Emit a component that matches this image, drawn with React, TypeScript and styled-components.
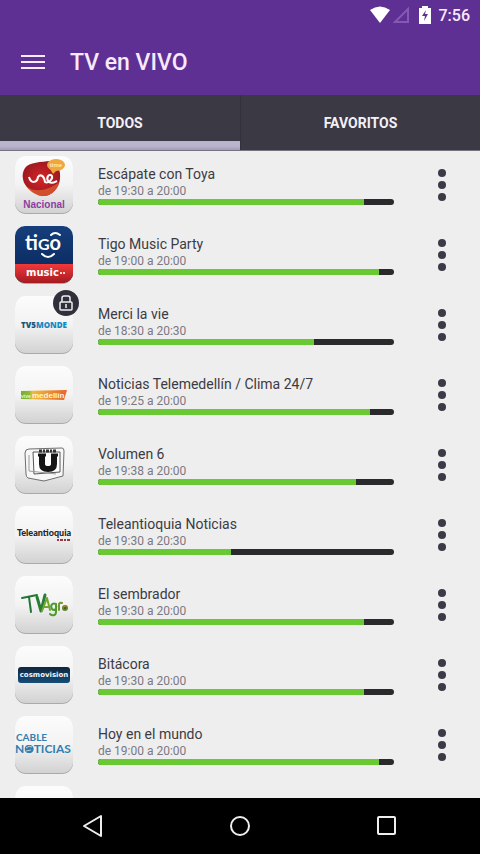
import React from "react";
import styled, { createGlobalStyle } from "styled-components";

const GlobalStyle = createGlobalStyle`
  * { box-sizing: border-box; }
  html, body, #root { height: 100%; }
  body { margin: 0; background: #eeeeee; font-family: Roboto, "Noto Sans", sans-serif; }
  button { font: inherit; color: inherit; border: 0; padding: 0; background: none; cursor: pointer; }
`;

const Screen = styled.div`
  display: flex;
  flex-direction: column;
  height: 100vh;
  overflow: hidden;
`;

const Header = styled.header`
  background: #5e3094;
  color: #f9e9fd;
  flex: none;
`;

const StatusBar = styled.div`
  display: flex;
  justify-content: flex-end;
  align-items: center;
  gap: 8px;
  height: 30px;
  padding-right: 10px;
  font-size: 16px;
  font-weight: 500;
  svg { display: block; }
`;

const TitleBar = styled.div`
  display: flex;
  align-items: center;
  height: 65px;
  padding-left: 20px;
  gap: 25px;
`;

const MenuButton = styled.button`
  display: flex;
  svg { display: block; }
`;

const Title = styled.h1`
  margin: 0;
  font-size: 23px;
  line-height: 28px;
  font-weight: 500;
`;

const Tabs = styled.nav`
  display: grid;
  grid-template-columns: 1fr 1fr;
  flex: none;
  height: 56px;
  background: #3a3944;
  border-bottom: 1px solid #77737f;
`;

const Tab = styled.button<{ $active?: boolean }>`
  color: #f4f0f8;
  font-size: 14px;
  font-weight: 700;
  background: ${(p) =>
    p.$active ? "linear-gradient(to top, #a39cb9, #bab4cd 4px, #bab4cd 9px, transparent 9px)" : "none"};
  & + & { border-left: 1px solid #33323c; }
`;

const List = styled.ul`
  flex: 1;
  min-height: 0;
  overflow: hidden;
  margin: 0;
  padding: 0;
  list-style: none;
`;

const Row = styled.li`
  display: flex;
  align-items: center;
  height: 70px;
  padding: 0 22px 2px 14px;
`;

const Logo = styled.div`
  position: relative;
  flex: none;
  width: 60px;
  height: 60px;
  margin-right: 24px;
  svg { display: block; }
`;

const Badge = styled.span`
  position: absolute;
  top: -5px;
  right: -5px;
`;

const Info = styled.div`
  flex: 1;
  min-width: 0;
  padding-bottom: 1px;
`;

const Name = styled.h2`
  margin: 0;
  font-size: 14px;
  line-height: 20px;
  font-weight: 400;
  color: #3c3b43;
  white-space: nowrap;
`;

const Time = styled.p`
  margin: 0;
  font-size: 12px;
  line-height: 15px;
  color: #7b7883;
`;

const Bar = styled.div`
  height: 6px;
  border-radius: 3px;
  overflow: hidden;
  background: #2a2a2c;
`;

const Fill = styled.div`
  height: 100%;
  background: #68c932;
`;

const More = styled.button`
  display: flex;
  justify-content: center;
  width: 32px;
  margin-left: 32px;
  svg { display: block; }
`;

const NavBar = styled.nav`
  display: flex;
  justify-content: center;
  align-items: center;
  flex: none;
  height: 56px;
  background: #000;
`;

const NavButton = styled.button`
  display: flex;
  justify-content: center;
  width: 147px;
`;

const f = "Liberation Sans";

const Nacional = () => (
  <>
    <path d="M11 13C15 7 28 7 36 6C44 7 47 16 46 24C45 34 37 41 30 41C24 42 10 33 9 24C8 20 9 16 11 13Z" fill="url(#red)" />
    <path d="M12 31C20 38 34 36 45 27C44 35 36 41 30 41C24 42 16 37 12 31Z" fill="#e36532" opacity=".7" />
    <ellipse cx="42" cy="10" rx="9" ry="6" fill="#efa63c" />
    <path d="M35 12L39 19L44 14Z" fill="#efa63c" />
    <text x="42" y="12" fontSize="6" fontFamily={f} fontWeight="700" fill="#ffe7b5" textAnchor="middle">time</text>
    <path d="M15 22C17 29 23 28 24 22C26 19 30 20 31 27C34 29 39 24 38 21C35 18 31 23 35 27C38 29 41 27 43 26" fill="none" stroke="#fff" strokeWidth="2" />
    <text x="30" y="53" fontSize="10" fontFamily={f} fontWeight="700" fill="#8e3da3" textAnchor="middle">Nacional</text>
  </>
);

const Tigo = () => (
  <>
    <clipPath id="tile"><rect x="1" y="1" width="58" height="57" rx="10" /></clipPath>
    <g clipPath="url(#tile)">
      <rect width="60" height="60" fill="url(#blue)" />
      <path d="M0 39H60V60H0Z" fill="url(#redband)" />
    </g>
    <text x="29" y="25" fontSize="20" fontFamily="Lato" fontWeight="700" fill="#fff" textAnchor="middle">
      ti<tspan fontSize="16">G</tspan>o
    </text>
    <path d="M37 10Q41 6 46 10M28 29Q34 35 40 29" fill="none" stroke="#fff" strokeWidth="2" strokeLinecap="round" />
    <text x="12" y="51" fontSize="10" fontFamily="DejaVu Sans" fontWeight="700" fill="#fff">music</text>
    <path d="M46 48H51" stroke="#ffd3cf" strokeWidth="2" strokeDasharray="2 1" />
  </>
);

const Monde = () => (
  <text x="30" y="33" fontSize="8" fontFamily="Open Sans" fontWeight="800" fill="#1688c4" textAnchor="middle">
    <tspan fill="#1a5578">TV5</tspan>MONDE
  </text>
);

const Medellin = () => (
  <>
    <path d="M7 26L53 25L50 35L7 34Z" fill="url(#orange)" />
    <text x="7" y="33" fontSize="5" fontFamily={f} fontWeight="700" fill="#e8f6c6">vive</text>
    <text x="18" y="33" fontSize="8" fontFamily={f} fontWeight="700" fill="#fff4d5">medellín</text>
  </>
);

const CanalU = () => (
  <>
    <path d="M15 14L48 13Q50 13 50 16L49 41L30 46L14 43Q12 42 12 39L11 18Q11 14 15 14Z" fill="#f7f7f7" stroke="#6e6e6e" strokeWidth="1" />
    <path d="M19 17H46V37L20 39Z" fill="#fff" stroke="#555" />
    <path d="M15 20V36L42 39" fill="none" stroke="#999" />
    <path d="M25 16H43" stroke="#333" strokeWidth="3" strokeDasharray="3 1 2 1" />
    <path d="M28 20V29Q28 34 34 34Q40 34 40 29V20" fill="none" stroke="#151515" strokeWidth="6" />
    <path d="M24 20H32M37 20H44" stroke="#151515" strokeWidth="3" />
  </>
);

const Teleantioquia = () => (
  <>
    <text x="30" y="31" fontSize="9" fontFamily="Lato" fontWeight="900" fill="#252525" textAnchor="middle">Teleantioquia</text>
    <path d="M43 35H56" stroke="#963a42" strokeWidth="2" strokeDasharray="2 1 3 1" />
  </>
);

const Agro = () => (
  <g fill="none" strokeLinecap="round" strokeLinejoin="round">
    <path d="M8 23L23 20M15 22L17 37" stroke="#277438" strokeWidth="2" />
    <path d="M23 22L27 36L31 20" stroke="#277e34" strokeWidth="3" />
    <path d="M28 36L33 23L36 35M30 32H35" stroke="#72a72b" strokeWidth="2" />
    <path d="M42 29C38 27 36 31 38 34C41 37 43 33 42 29L42 37C42 41 38 41 36 39" stroke="#4d9b2f" strokeWidth="2" />
    <path d="M45 35V29Q46 27 48 28" stroke="#72982f" strokeWidth="2" />
    <circle cx="51" cy="33" r="2" fill="#344822" stroke="#66852a" strokeWidth="2" />
    <path d="M50 32L52 31" stroke="#c18432" />
  </g>
);

const Cosmovision = () => (
  <>
    <rect x="4" y="22" width="52" height="16" rx="3" fill="url(#navy)" />
    <text x="30" y="32" fontSize="7" fontFamily="DejaVu Sans" fontWeight="700" fill="#f1f7fb" textAnchor="middle" textRendering="geometricPrecision">cosmovision</text>
  </>
);

const Cable = () => (
  <>
    <text x="2" y="26" fontSize="10" fontFamily="Lato" fontWeight="700" fill="#327fb0">CABLE</text>
    <text x="1" y="38" fontSize="12" fontFamily="Lato" fontWeight="700" fill="#327fb0">NOTICIAS</text>
    <circle cx="15" cy="34" r="4" fill="#347eaf" />
    <path d="M12 33Q15 30 18 32M12 36L17 35" stroke="#b9d1dc" fill="none" />
  </>
);

type Channel = { name: string; time: string; pct: number; Art?: React.FC; locked?: boolean };

const channels: Channel[] = [
  { name: "Escápate con Toya", time: "de 19:30 a 20:00", pct: 90, Art: Nacional },
  { name: "Tigo Music Party", time: "de 19:00 a 20:00", pct: 95, Art: Tigo },
  { name: "Merci la vie", time: "de 18:30 a 20:30", pct: 73, Art: Monde, locked: true },
  { name: "Noticias Telemedellín / Clima 24/7", time: "de 19:25 a 20:00", pct: 92, Art: Medellin },
  { name: "Volumen 6", time: "de 19:38 a 20:00", pct: 87, Art: CanalU },
  { name: "Teleantioquia Noticias", time: "de 19:30 a 20:30", pct: 45, Art: Teleantioquia },
  { name: "El sembrador", time: "de 19:30 a 20:00", pct: 90, Art: Agro },
  { name: "Bitácora", time: "de 19:30 a 20:00", pct: 90, Art: Cosmovision },
  { name: "Hoy en el mundo", time: "de 19:00 a 20:00", pct: 95, Art: Cable },
  { name: "Acento del día", time: "de 19:30 a 20:00", pct: 90 },
];

const Gradients = () => (
  <svg width="0" height="0" aria-hidden="true" display="block">
    <defs>
      <linearGradient id="gray" x2="0" y2="1"><stop stopColor="#fcfcfc" /><stop offset=".5" stopColor="#f3f3f3" /><stop offset="1" stopColor="#d2d2d2" /></linearGradient>
      <linearGradient id="blue" x2="0" y2="1"><stop stopColor="#163f7c" /><stop offset="1" stopColor="#072458" /></linearGradient>
      <linearGradient id="redband" x2="0" y2="1"><stop stopColor="#f1393b" /><stop offset="1" stopColor="#9c171d" /></linearGradient>
      <linearGradient id="navy" x2="0" y2="1"><stop stopColor="#10263d" /><stop offset="1" stopColor="#164d77" /></linearGradient>
      <linearGradient id="orange"><stop stopColor="#6fae32" /><stop offset=".18" stopColor="#8fb936" /><stop offset=".25" stopColor="#eebc3c" /><stop offset="1" stopColor="#e7632d" /></linearGradient>
      <radialGradient id="red"><stop stopColor="#d52626" /><stop offset="1" stopColor="#9f1820" /></radialGradient>
    </defs>
  </svg>
);

export default function App() {
  return (
    <Screen>
      <GlobalStyle />
      <Gradients />
      <Header>
        <StatusBar>
          <svg width="41" height="18" viewBox="0 0 41 18" aria-hidden="true">
            <path d="M0 4Q10-3 20 4L10 17Z" fill="#fff" />
            <path d="M38 3V16H25Z" fill="none" stroke="#8558b3" strokeWidth="2" />
          </svg>
          <svg width="12" height="18" viewBox="0 0 12 18" aria-hidden="true">
            <path d="M0 2H3V0H9V2H12V18H0Z" fill="#fff" />
            <path d="M7 4L3 10H6L5 15L9 8H6Z" fill="#5e3094" />
          </svg>
          <span>7:56</span>
        </StatusBar>
        <TitleBar>
          <MenuButton aria-label="Menú">
            <svg width="25" height="17"><path d="M1 2H25M1 8H25M1 14H25" stroke="#f9e9fd" strokeWidth="2" /></svg>
          </MenuButton>
          <Title>TV en VIVO</Title>
        </TitleBar>
      </Header>
      <Tabs>
        <Tab $active>TODOS</Tab>
        <Tab>FAVORITOS</Tab>
      </Tabs>
      <List>
        {channels.map(({ name, time, pct, Art, locked }) => (
          <Row key={name}>
            <Logo>
              <svg width="60" height="60" viewBox="0 0 60 60" aria-hidden="true">
                <rect x="1" y="2" width="58" height="57" rx="11" fill="#aaa" />
                <rect x="1" y="1" width="58" height="57" rx="11" fill="url(#gray)" />
                {Art && <Art />}
              </svg>
              {locked && (
                <Badge>
                  <svg width="26" height="26" viewBox="0 0 26 26" aria-label="Bloqueado">
                    <circle cx="13" cy="13" r="13" fill="#302f3b" />
                    <path d="M9 12V8Q9 6 11 6H15Q17 6 17 8V12M8 12H18Q19 12 19 13V19Q19 20 18 20H8Q7 20 7 19V13Q7 12 8 12ZM13 14V18" fill="none" stroke="#eee" strokeWidth="1.5" />
                  </svg>
                </Badge>
              )}
            </Logo>
            <Info>
              <Name>{name}</Name>
              <Time>{time}</Time>
              <Bar><Fill style={{ width: `${pct}%` }} /></Bar>
            </Info>
            <More aria-label={`Opciones de ${name}`}>
              <svg width="8" height="32" fill="#3b3a46"><circle cx="4" cy="4" r="4" /><circle cx="4" cy="16" r="4" /><circle cx="4" cy="28" r="4" /></svg>
            </More>
          </Row>
        ))}
      </List>
      <NavBar>
        <NavButton aria-label="Atrás">
          <svg width="22" height="24" fill="none" stroke="#eee" strokeWidth="2"><path d="M19 2V22L2 12Z" strokeLinejoin="round" /></svg>
        </NavButton>
        <NavButton aria-label="Inicio">
          <svg width="22" height="22" fill="none" stroke="#eee" strokeWidth="2"><circle cx="11" cy="11" r="9" /></svg>
        </NavButton>
        <NavButton aria-label="Recientes">
          <svg width="20" height="20" fill="none" stroke="#eee" strokeWidth="2"><rect x="1" y="1" width="17" height="17" rx="1" /></svg>
        </NavButton>
      </NavBar>
    </Screen>
  );
}
